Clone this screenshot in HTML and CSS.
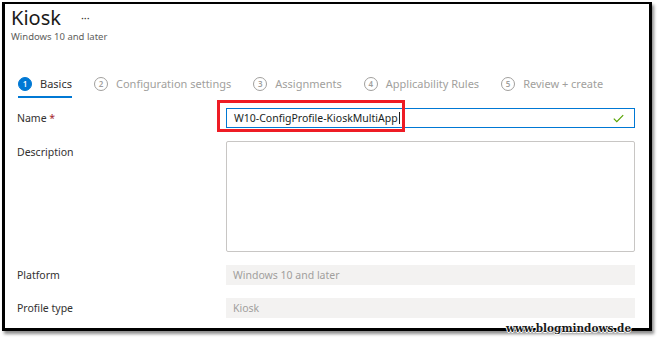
FILE: index.html
```html
<!doctype html>
<html lang="en">
	<head>
		<meta charset="UTF-8" />
		<meta name="viewport" content="width=device-width, initial-scale=1.0" />
		<title>Kiosk - Windows 10 and later</title>
		<link rel="stylesheet" href="styles.css">
	</head>
	<body>
		<div class="frame">
			<div class="blade-header">
				<div class="title-line">
					<h1>Kiosk</h1>
					<span class="more">···</span>
				</div>
				<p class="subtitle">Windows 10 and later</p>
			</div>

			<div class="tabs">
				<div class="tab active"><span class="step">1</span><span class="tab-label">Basics</span></div>
				<div class="tab"><span class="step">2</span><span class="tab-label">Configuration settings</span></div>
				<div class="tab"><span class="step">3</span><span class="tab-label">Assignments</span></div>
				<div class="tab"><span class="step">4</span><span class="tab-label">Applicability Rules</span></div>
				<div class="tab"><span class="step">5</span><span class="tab-label">Review + create</span></div>
			</div>

			<form class="form">
				<div class="row">
					<label for="name">Name <span class="req">*</span></label>
					<div class="field-wrap">
						<div class="input focused">
							<span id="name">W10-ConfigProfile-KioskMultiApp</span><span class="caret"></span>
							<svg class="check" width="11" height="9" viewBox="0 0 11 9"><path d="M0.8 4.6 L3.8 7.6 L10.2 1.2" fill="none" stroke="#57a300" stroke-width="1.2"/></svg>
						</div>
						<div class="highlight"></div>
					</div>
				</div>
				<div class="row row-top">
					<label>Description</label>
					<div class="textarea"></div>
				</div>
				<div class="row">
					<label>Platform</label>
					<div class="input disabled">Windows 10 and later</div>
				</div>
				<div class="row">
					<label>Profile type</label>
					<div class="input disabled">Kiosk</div>
				</div>
			</form>
		</div>
		<div class="watermark">www.blogmindows.de</div>
	</body>
</html>
```

FILE: styles.css
```css
body {
	margin: 0;
	background: #fff;
	font-family: 'Noto Sans', 'Open Sans', sans-serif;
	color: #323130;
	position: relative;
	height: 341px;
	overflow: hidden;
}
.frame {
	box-sizing: border-box;
	margin: 2px 0 0 2px;
	width: 650px;
	height: 329px;
	border: 3px solid #000;
	border-top-width: 2px;
	box-shadow: 2px 3px 3px rgba(0, 0, 0, 0.45);
	background: #fff;
}
.blade-header {
	padding: 0 0 0 6px;
}
.title-line {
	display: flex;
	align-items: center;
	height: 27px;
}
h1 {
	margin: 0;
	font-size: 20px;
	font-weight: 400;
	color: #1b1a19;
	line-height: 27px;
}
.more {
	margin-left: 20px;
	font-size: 11px;
	color: #323130;
}
.subtitle {
	margin: 0;
	font-size: 9.5px;
	color: #605e5c;
	line-height: 12px;
}
.tabs {
	display: flex;
	gap: 22px;
	margin: 31px 0 0 13px;
}
.tab {
	display: flex;
	align-items: center;
	gap: 8px;
	padding: 2px 0 5px;
	font-size: 11px;
	color: #a19f9d;
	border-bottom: 2px solid transparent;
}
.tab.active {
	color: #323130;
	border-bottom-color: #0078d4;
}
.step {
	box-sizing: border-box;
	width: 14px;
	height: 14px;
	border-radius: 50%;
	border: 1px solid #a19f9d;
	font-size: 8px;
	line-height: 12px;
	text-align: center;
	font-weight: 600;
}
.tab.active .step {
	background: #0078d4;
	border-color: #0078d4;
	color: #fff;
}
.form {
	margin-top: 10px;
	padding-left: 12px;
	display: flex;
	flex-direction: column;
	gap: 13px;
}
.row {
	display: grid;
	grid-template-columns: 209px 409px;
	align-items: center;
	font-size: 10.5px;
}
.row-top {
	align-items: start;
}
.row-top label {
	padding-top: 4px;
}
label {
	color: #323130;
}
.req {
	color: #a4262c;
}
.field-wrap {
	position: relative;
}
.input {
	box-sizing: border-box;
	height: 20px;
	display: flex;
	align-items: center;
	padding: 0 7px;
	font-size: 10.5px;
}
.input.focused {
	border: 1px solid #0078d4;
	color: #201f1e;
}
.caret {
	width: 1px;
	height: 12px;
	background: #201f1e;
	margin-left: 1px;
}
.check {
	margin-left: auto;
	margin-right: 3px;
}
.input.disabled {
	background: #f3f2f1;
	color: #a19f9d;
}
.textarea {
	box-sizing: border-box;
	height: 111px;
	border: 1px solid #c8c6c4;
	border-radius: 2px;
}
.highlight {
	position: absolute;
	left: -9px;
	top: -8px;
	width: 188px;
	height: 32px;
	box-sizing: border-box;
	border: 3px solid #ee1c25;
}
.watermark {
	position: absolute;
	left: 506px;
	top: 322px;
	font-family: 'DejaVu Serif', serif;
	font-weight: 700;
	font-size: 10.5px;
	line-height: 13px;
	color: #1a1a1a;
	text-shadow: 1px 0 #fff, -1px 0 #fff, 0 1px #fff;
}
```
